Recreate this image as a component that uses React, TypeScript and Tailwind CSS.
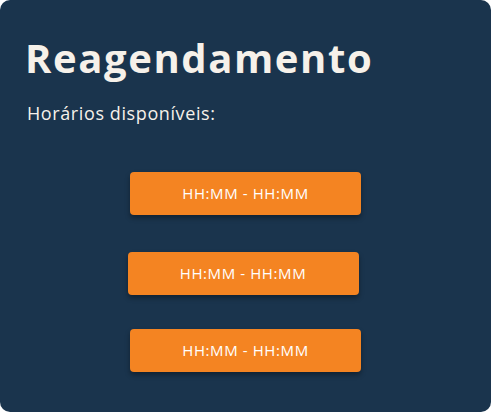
export default function App() {
  const slots = [
    { cls: "mt-[47px]" },
    { cls: "mt-[37px] mr-[5px]" },
    { cls: "mt-[34px]" },
  ];
  return (
    <div className="w-[491px] h-[412px] bg-white">
      <div
        className="w-[491px] h-[412px] bg-[#1a344d] rounded-[10px] px-[25px] pt-[34px]"
        style={{ fontFamily: "'Open Sans', 'Liberation Sans', sans-serif" }}
      >
        <h1 className="text-[40px] leading-[48px] font-bold text-[#f6f1ea] tracking-[1.6px]">
          Reagendamento
        </h1>
        <p className="mt-[19px] ml-[2px] text-[18px] leading-[24px] text-[#f6f1ea] tracking-[0.6px]">Horários disponíveis:</p>
        <div className="flex flex-col items-center">
          {slots.map((s, i) => (
            <button
              key={i}
              className={`${s.cls} w-[231px] h-[43px] rounded-[4px] bg-[#f48422] text-white text-[15px] tracking-[0.6px] shadow-[0_3px_5px_rgba(0,0,0,0.35)]`}
            >
              HH:MM - HH:MM
            </button>
          ))}
        </div>
      </div>
    </div>
  );
}
